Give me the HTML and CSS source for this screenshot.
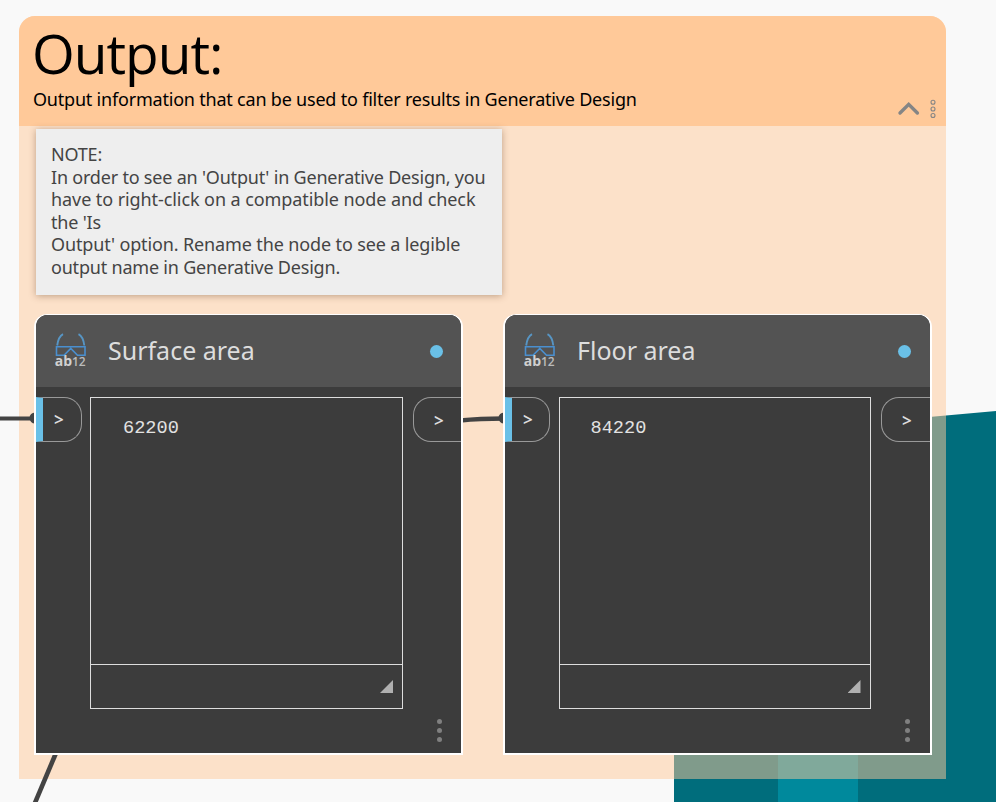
FILE: index.html
```html
<!DOCTYPE html>
<html lang="en">
<head>
<meta charset="utf-8">
<title>Output</title>
<link rel="stylesheet" href="styles.css">
</head>
<body>
<main class="canvas">
  <svg class="scene" width="996" height="802">
    <path d="M674 440L996 411V802H674Z" fill="#006d7c"/>
    <path d="M778 700H858V802H778Z" fill="#00899c"/>
  </svg>
  <section class="group">
    <header class="group-head">
      <h1>Output:</h1>
      <p>Output information that can be used to filter results in Generative Design</p>
      <svg class="tools" width="44" height="22" fill="none" stroke="#858585">
        <path d="M3 15L11.7 6.3L20.4 15" stroke-width="3.4" stroke-linecap="round"/>
        <g stroke-width="1.1"><circle cx="36" cy="4.3" r="2"/><circle cx="36" cy="11" r="2"/><circle cx="36" cy="17.5" r="2"/></g>
      </svg>
    </header>
  </section>
  <svg class="scene" width="996" height="802" fill="none" stroke="#434343">
    <path d="M0 418.5H36" stroke-width="4"/>
    <circle cx="35" cy="418" r="5.5" fill="#434343" stroke="none"/>
    <path d="M460 420.5Q480 418.5 504 418.5" stroke-width="4.5"/>
    <circle cx="504" cy="418" r="5.5" fill="#434343" stroke="none"/>
    <path d="M56 753L34.5 804" stroke-width="4.6"/>
  </svg>
  <aside class="note">
    <div class="l1">NOTE:</div>
    <div class="l2">In order to see an 'Output' in Generative Design, you</div>
    <div class="l3">have to right-click on a compatible node and check</div>
    <div class="l4">the 'Is</div>
    <div class="l5">Output' option. Rename the node to see a legible</div>
    <div class="l6">output name in Generative Design.</div>
  </aside>
  <article class="node surface">
    <header>
      <svg class="icon" viewBox="0 0 34 38">
        <g fill="none" stroke="#4a8fcf" stroke-width="1.6">
          <path d="M9 2.2C5.5 4 4 8 3.2 13.5M24.5 2.2C28 4 29.6 8 30.3 13.5" stroke="#5795c4" stroke-width="1.9"/>
          <path d="M2.5 14.7H31V23.3H23.5L16.8 16.5L10 23.3H2.5Z"/>
        </g>
        <text x="0.7" y="34" class="ab">ab</text><text x="18" y="34" class="num">12</text>
      </svg>
      <h2>Surface area</h2><i class="dot"></i>
    </header>
    <div class="body">
      <div class="port in">&gt;</div>
      <div class="watch"><div class="value">62200</div><div class="foot"><i class="grip"></i></div></div>
      <div class="port out">&gt;</div>
    </div>
    <footer><i></i><i></i><i></i></footer>
  </article>
  <article class="node floor">
    <header>
      <svg class="icon" viewBox="0 0 34 38">
        <g fill="none" stroke="#4a8fcf" stroke-width="1.6">
          <path d="M9 2.2C5.5 4 4 8 3.2 13.5M24.5 2.2C28 4 29.6 8 30.3 13.5" stroke="#5795c4" stroke-width="1.9"/>
          <path d="M2.5 14.7H31V23.3H23.5L16.8 16.5L10 23.3H2.5Z"/>
        </g>
        <text x="0.7" y="34" class="ab">ab</text><text x="18" y="34" class="num">12</text>
      </svg>
      <h2>Floor area</h2><i class="dot"></i>
    </header>
    <div class="body">
      <div class="port in">&gt;</div>
      <div class="watch"><div class="value">84220</div><div class="foot"><i class="grip"></i></div></div>
      <div class="port out">&gt;</div>
    </div>
    <footer><i></i><i></i><i></i></footer>
  </article>
</main>
</body>
</html>
```
FILE: styles.css
```css
* { box-sizing: border-box; }
body { margin: 0; background: #f9f9f9; overflow: hidden; font-family: "Open Sans", sans-serif; }
h1, h2, p { margin: 0; font-weight: 400; white-space: nowrap; }
.canvas { position: relative; width: 996px; height: 802px; overflow: hidden; }
.scene { position: absolute; left: 0; top: 0; }
.group { position: absolute; left: 19px; top: 16px; width: 927px; height: 763px; border-radius: 16px 16px 0 0; overflow: hidden; background: rgba(255, 201, 153, .5); }
.group-head { position: relative; height: 110px; background: #ffc999; padding: 2px 0 0 14px; color: #000; }
h1 { margin-left: -1px; font-size: 55px; line-height: 70px; letter-spacing: -1px; }
.group-head p { font-family: "Noto Sans", sans-serif; font-size: 18px; line-height: 22px; letter-spacing: -.205px; }
.tools { position: absolute; left: 878px; top: 82px; }
.note { position: absolute; left: 35.5px; top: 129px; width: 466px; height: 166px; padding: 14px 15.5px; background: #eee; box-shadow: 0 1px 7px rgba(90, 50, 20, .38); color: #444; font: 18px/22.6px "Noto Sans", sans-serif; letter-spacing: -.2px; white-space: nowrap; }
.l3 { letter-spacing: -.08px; }
.l5 { letter-spacing: -.13px; }
.node { position: absolute; top: 314px; height: 441px; border: 2px solid #fff; border-top-width: 1px; border-radius: 13px 13px 0 0; background: #3c3c3c; color: #ddd; overflow: hidden; }
.surface { left: 34px; width: 429px; }
.floor { left: 503px; width: 429px; }
.node header { height: 72px; padding: 0 18px 0 19px; display: flex; align-items: center; background: #535353; }
.icon { width: 34px; height: 38px; margin: -1px 0 0 -1px; }
.ab { font: 700 14px "Open Sans", sans-serif; fill: #d0d0d0; }
.num { font: 600 12px "Open Sans", sans-serif; fill: #bbb; }
h2 { margin: -2px 0 0 20px; font-family: "Noto Sans", sans-serif; font-size: 25px; flex: 1; }
.dot { width: 13px; height: 13px; border-radius: 50%; background: #6ac0e7; }
.body { display: flex; justify-content: space-between; padding-top: 10px; }
.port { height: 45px; border: 1.5px solid #999; font: 600 17px/43px "Noto Sans", sans-serif; }
.in { width: 46px; border-left: 7px solid #6ac0e7; border-radius: 0 18px 18px 0; padding-left: 11px; }
.out { width: 48px; border-right: 0; border-radius: 18px 0 0 18px; padding-left: 20px; line-height: 45px; }
.watch { width: 313px; height: 312px; margin-right: 2px; border: 1px solid #ddd; display: flex; flex-direction: column; }
.value { flex: 1; padding: 20px 0 0 32px; font: 18.6px/22px "Liberation Mono", monospace; color: #e2e2e2; }
.foot { height: 44px; border-top: 1px solid #ddd; display: flex; justify-content: flex-end; padding: 15px 9px 0 0; }
.grip { width: 13px; height: 13px; background: #b0b0b0; clip-path: polygon(100% 0, 100% 100%, 0 100%); }
.node footer { display: flex; flex-direction: column; gap: 4px; align-items: flex-end; padding: 10px 19px 0 0; }
.node footer i { width: 5px; height: 5px; border-radius: 50%; background: #808080; }
.floor .in { width: 45px; }
.floor .in + .watch { width: 312px; }
.floor .out { width: 49px; }
.floor .value { padding-left: 31px; }
.floor header { padding-right: 19px; }
.floor footer { padding-right: 20px; }
```
